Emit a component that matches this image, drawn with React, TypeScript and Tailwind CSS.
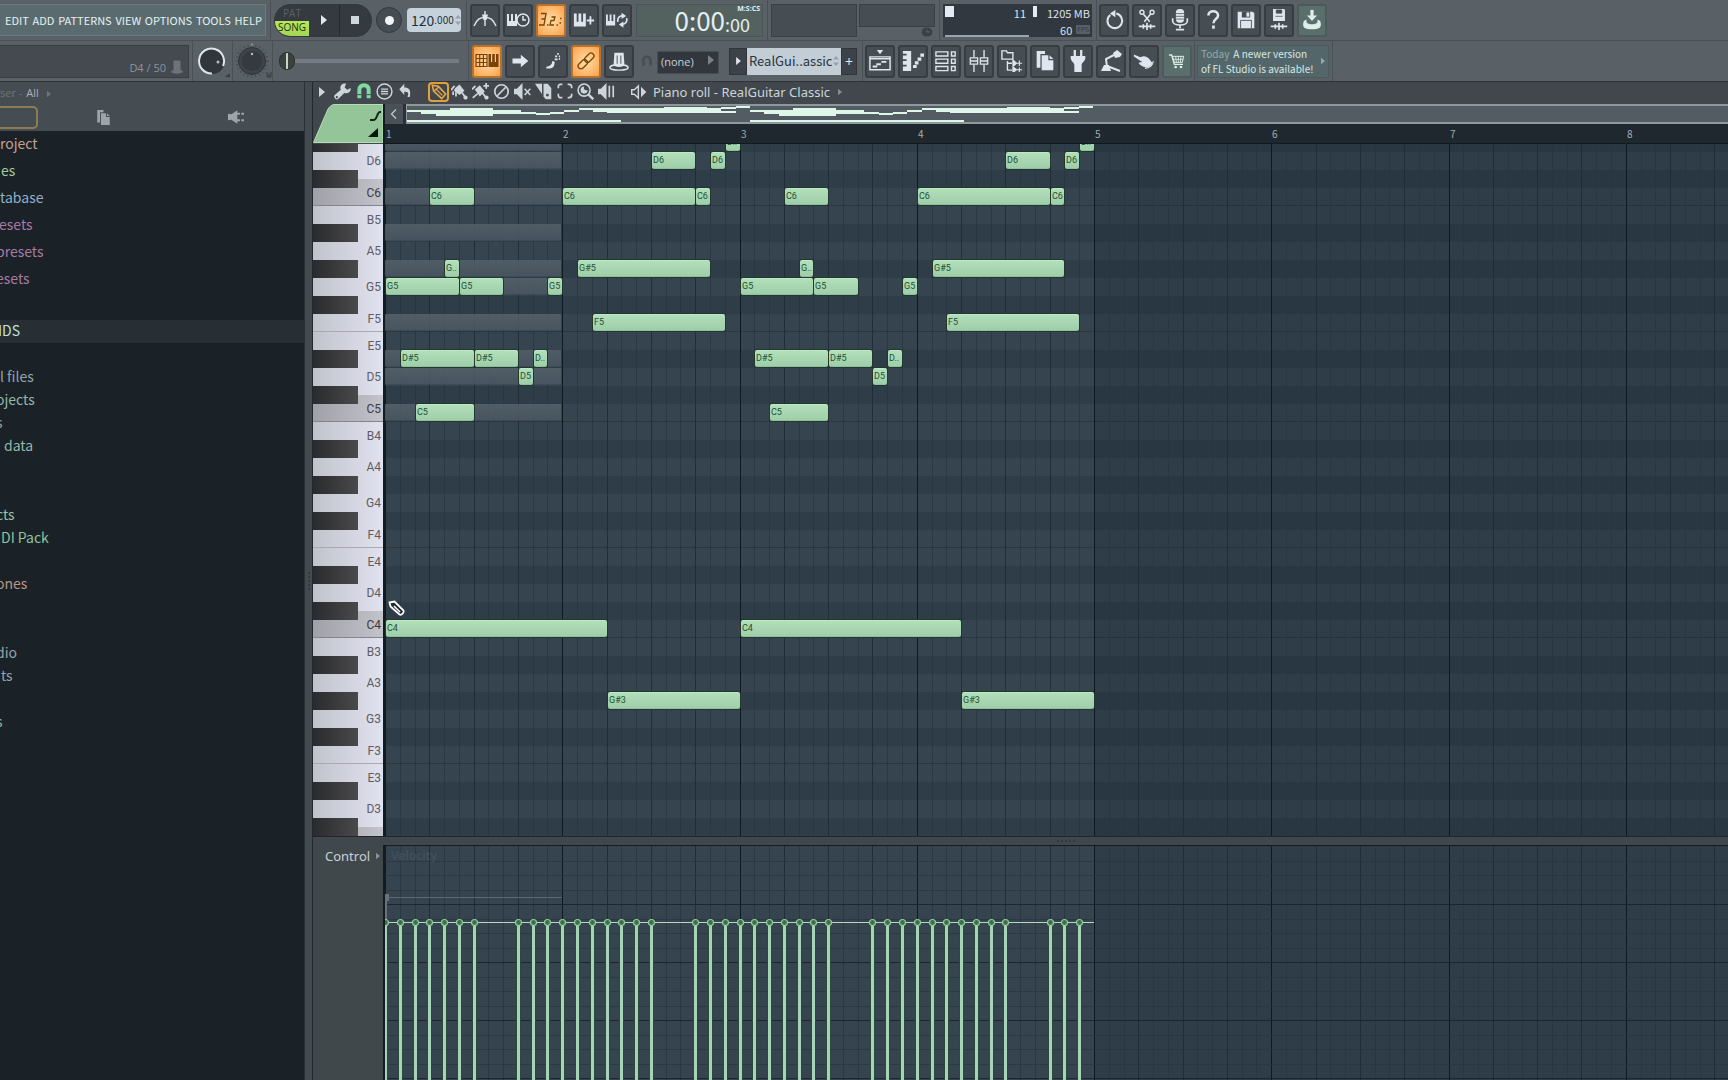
import React from "react";

const NARROW = "font-['Noto_Sans_CJK_SC','Open_Sans',sans-serif]";

/* ---------- score data ---------- */

const BAR = 177.25;
const ROW = 18;
const SONG_STEPS = 48;
const x = (step: number) => Math.round((step * BAR) / 12);

const NAMES = ["C", "C#", "D", "D#", "E", "F", "F#", "G", "G#", "A", "A#", "B"];
const ROWS: string[] = [];
for (let p = 6 * 12 + 3; p >= 3 * 12 + 1; p--) ROWS.push(NAMES[p % 12] + Math.floor(p / 12));

type Note = [pitch: string, start: number, end: number, label?: string];
const PHRASE: Note[] = [
  ["C4", 0, 15],
  ["G#3", 15, 24],
  ["G5", 0, 5],
  ["G5", 5, 8],
  ["G5", 11, 12],
  ["G#5", 4, 5, "G.."],
  ["C6", 3, 6],
  ["D#5", 1, 6],
  ["D#5", 6, 9],
  ["D#5", 10, 11, "D.."],
  ["D5", 9, 10],
  ["C5", 2, 6],
  ["C6", 12, 21],
  ["C6", 21, 22],
  ["G#5", 13, 22],
  ["F5", 14, 23],
  ["D6", 18, 21],
  ["D6", 22, 23],
  ["D#6", 23, 24, "D.."],
];
const NOTES: Note[] = [0, 24].flatMap((o) =>
  PHRASE.map(([p, s, e, l]) => [p, s + o, e + o, l] as Note),
);
const GHOSTS = ["D#6", "D6", "C6", "A#5", "G#5", "G5", "F5", "D#5", "D5", "C5"];
const PHRASE_HITS = [0, 1, 2, 3, 4, 5, 6, 9, 10, 11, 12, 13, 14, 15, 16, 17, 18, 21, 22, 23];
const HITS = [...PHRASE_HITS, ...PHRASE_HITS.map((h) => h + 24)];
const rowTop = (pitch: string) => ROWS.indexOf(pitch) * ROW - 10;

/* ---------- icons ---------- */

function Icon({ children, size = 22, className = "" }: { children: React.ReactNode; size?: number; className?: string }) {
  return (
    <svg
      width={size}
      height={size}
      viewBox="0 0 24 24"
      fill="none"
      stroke="currentColor"
      strokeWidth="2"
      className={`shrink-0 ${className}`}
      aria-hidden="true"
    >
      {children}
    </svg>
  );
}

const F = { fill: "currentColor", stroke: "none" };

const icons = {
  metronome: (
    <Icon size={24}>
      <path d="M1 18C4 11 7 9.500 12 9.500s8 1.500 11 8.500" strokeWidth="1.400" />
      <path d="M12 3v15" strokeWidth="1.400" />
      <path d="M9 6.500h6l-1.500 5.500h-3z" {...F} />
    </Icon>
  ),
  wait: (
    <Icon size={24}>
      <path d="M1 6h2v7h2V6h2v7h2V6h2v12H1z" {...F} />
      <circle cx="17" cy="12" r="6" fill="#444b51" strokeWidth="1.500" />
      <path d="M17 8v4h3" strokeWidth="1.500" />
    </Icon>
  ),
  countdown: (
    <Icon size={24}>
      <path d="M2 5.500h5L6 11H2.500 6l-1 6H0M12.500 9h3.500l-1 3.500h-3l-1 4.500h4" strokeWidth="1.300" />
      <path d="M8 17h1.500M17.500 17H19M21 10.500h1.500M20.500 15h1.500" strokeWidth="1.600" />
    </Icon>
  ),
  blend: (
    <Icon>
      <path d="M1 5h3v9h2V5h3v9h2V5h3v14H1z" {...F} />
      <path d="M19 8v9M15 12.500h8" />
    </Icon>
  ),
  loopRec: (
    <Icon>
      <path d="M0 6h2v7h2V6h2v7h2V6h2v12H0z" {...F} />
      <path d="M13 14c-1-4 2-7 5-6.500M22.500 10c1 4-2 7-5 6.500" strokeWidth="1.800" />
      <path d="M17 4l5 3.500-5 3.500zM19 20.500L14 17l5-3.500z" {...F} />
    </Icon>
  ),
  stepPiano: (
    <Icon size={24}>
      <path d="M1 5.500h11v12H1zM1 9.500h11M1 13.500h11M4.700 5v13M8.400 5v13" strokeWidth="1.200" />
      <path d="M13.500 5H16v8h1.200V5h2.600v8H21V5h2.500v13h-10z" {...F} />
    </Icon>
  ),
  arrow: (
    <Icon size={20}>
      <path d="M3 9h10V4.500l9 7.500-9 7.500V15H3z" {...F} />
    </Icon>
  ),
  scrollTo: (
    <Icon size={20}>
      <path d="M4 21h4c4 0 6-3 6-8l-3-1c0 4-2 6-7 7z" {...F} />
      <path d="M14 10h3.500M14.500 6.500H17M17 3.500h2M19 6.500h1.500M19 9.500h1.500" strokeWidth="2" />
    </Icon>
  ),
  link: (
    <Icon size={20}>
      <g transform="rotate(-45 12 12)" strokeWidth="1.600">
        <rect x="0" y="8.500" width="13" height="7" rx="3.500" />
        <rect x="11" y="8.500" width="13" height="7" rx="3.500" />
      </g>
    </Icon>
  ),
  hat: (
    <Icon>
      <ellipse cx="12" cy="19" rx="10" ry="3" strokeWidth="1.500" />
      <path d="M7 3h10l1 14c-3 2-9 2-12 0z" {...F} />
      <path d="M10 6v9M14 6v9" stroke="#444b51" strokeWidth="1" />
    </Icon>
  ),
  undoCircle: (
    <Icon>
      <path d="M8 6.500A8 8 0 1 0 14.500 5" strokeWidth="2.200" />
      <path d="M13.500 1v8L7.500 5z" {...F} />
    </Icon>
  ),
  cut: (
    <Icon>
      <circle cx="6.500" cy="3.500" r="2.200" strokeWidth="1.500" />
      <circle cx="17.500" cy="3.500" r="2.200" strokeWidth="1.500" />
      <path d="M8 5.500l7 8.500M16 5.500L9 14" strokeWidth="1.700" />
      <path d="M3 19h18M8 16.500v5M12 15v8M16 16.500v5" strokeWidth="1.800" />
    </Icon>
  ),
  mic: (
    <Icon>
      <rect x="7.500" y="0" width="9" height="15" rx="4" {...F} />
      <path d="M7 5h10M7 8h10M7 11h10" stroke="#444b51" strokeWidth=".8" />
      <path d="M4 10v3c0 6 16 6 16 0v-3M12 17v4M7.500 22.500h9" strokeWidth="1.800" />
    </Icon>
  ),
  help: (
    <Icon>
      <path d="M7 7c0-6 10.500-6 10.500 0 0 4-5 4-5 8.500" strokeWidth="2.800" />
      <rect x="11" y="18" width="3" height="3.500" {...F} />
    </Icon>
  ),
  save: (
    <Icon size={20}>
      <path d="M2 2h18l2 2v18H2z" {...F} />
      <path d="M7 2h10v7H7z" fill="#444b51" stroke="none" />
      <path d="M12.500 3H16v5h-3.500z" {...F} />
      <path d="M5 12.500h14M5.500 13v9M18.500 13v9" stroke="#444b51" strokeWidth="1" />
    </Icon>
  ),
  saveAs: (
    <Icon>
      <path d="M5.500 0h12l1 1v12h-13z" {...F} />
      <path d="M9 1h6v3.500H9zM8 8h8" fill="#444b51" stroke="#444b51" strokeWidth=".8" />
      <path d="M3 19h18M8 16.500v5M12 15v8M16 16.500v5" strokeWidth="1.800" />
    </Icon>
  ),
  download: (
    <Icon>
      <path d="M12 1v8" strokeWidth="3.500" />
      <path d="M6.500 7h11L12 13z" {...F} />
      <path d="M3 13c-2.500 8 2 9 9 9s11.500-1 9-9l-3-1.500v3c-2 3-10 3-12 0v-3z" {...F} />
    </Icon>
  ),
  playlist: (
    <Icon>
      <path d="M8.500 0h7L12 4.500z" {...F} />
      <path d="M1 7.500h22v14H1zM1 9.500h22" strokeWidth="1.600" />
      <path d="M4 18h5M8 15.500h5M13.500 13h5.500" strokeWidth="2" />
    </Icon>
  ),
  pianoRoll: (
    <Icon>
      <path d="M1 1h9v22H1v-5h4v-2H1v-4h4v-2H1V6h4V4H1z" {...F} />
      <path d="M12 18h4M14 14h4M17 10h4M20 5.500h4" strokeWidth="3.500" />
    </Icon>
  ),
  channelRack: (
    <Icon>
      <path d="M1 2h13v4.500H1zM1 10h13v4.500H1zM1 18h13v4.500H1zM18 2h4v4.500h-4zM18 10h4v4.500h-4zM18 18h4v4.500h-4z" strokeWidth="1.500" />
    </Icon>
  ),
  mixer: (
    <Icon>
      <path d="M6.500 0v8M6.500 16v8M17.500 0v8M17.500 16v8" strokeWidth="1.500" />
      <path d="M2.500 8.500h8v7h-8zM13.500 8.500h8v7h-8zM2.500 12h8M13.500 12h8" strokeWidth="1.400" />
    </Icon>
  ),
  browser: (
    <Icon>
      <path d="M1 1h5l1 2h6v7H1z" strokeWidth="1.500" />
      <path d="M7 12v10h5M7 14.500h5" strokeWidth="1.500" />
      <path d="M13 11v7l4-3.500zM17 14.500h6M20 11.500v6M13 18.500v6l4-3zM17 21.500h6M20 19v5" fill="currentColor" strokeWidth="1.200" />
    </Icon>
  ),
  project: (
    <Icon size={20}>
      <path d="M2 0h10v3.500H6.500V20H2z" {...F} />
      <path d="M8 5h8v6h6v12H8z" {...F} />
      <path d="M17.500 5l4.500 4.500h-4.500z" {...F} />
    </Icon>
  ),
  plug: (
    <Icon>
      <path d="M8.500 0v7M15.500 0v7" strokeWidth="2.500" />
      <path d="M4 6.500h16v2c0 4-4 5-4 8V24H8v-7.500c0-3-4-4-4-8z" {...F} />
    </Icon>
  ),
  tempoTap: (
    <Icon size={24}>
      <path d="M14 4l4-3 5 4-2 3-5 1z" {...F} />
      <path d="M15 6L7 10l1 8M8 17l13 5" strokeWidth="2" />
      <path d="M5 16h5l2 6H2z" {...F} />
    </Icon>
  ),
  touch: (
    <Icon size={22}>
      <path d="M1 5l7 3c4-2 6-1 9 1l4 5c0 3-3 5-6 5-4 0-7-2-9-5l4-1-9-6z" {...F} />
      <path d="M22 12c0 5-4 8-9 8" strokeWidth="1.200" />
    </Icon>
  ),
  cart: (
    <Icon size={16}>
      <path d="M0 3h4l4 14h13" strokeWidth="2" />
      <path d="M5 5h17l-2 9H8z" strokeWidth="1.500" />
      <path d="M10 5l1 9M14 5v9M18 5l-1 9M6 9.500h15" strokeWidth="1.300" />
      <circle cx="10" cy="21" r="2" {...F} />
      <circle cx="18" cy="21" r="2" {...F} />
    </Icon>
  ),
  wrench: (
    <Icon size={17}>
      <path d="M23.500 7l-5 2.500-3.500-3.500 2-5C11 0 7.500 4.500 9.500 9.500L1 17c-2.500 3 2 8 5 5.500l8.500-8.500c5.500 1.500 10-2 9-7zM4 18.500a1.500 1.500 0 1 1 0 3 1.500 1.500 0 0 1 0-3z" fillRule="evenodd" {...F} />
    </Icon>
  ),
  magnet: (
    <Icon size={16}>
      <path d="M5 23V10c0-9 14-9 14 0v13" strokeWidth="6" />
      <path d="M2 17.500h6M16 17.500h6" stroke="#41484d" strokeWidth="1.500" />
    </Icon>
  ),
  menu: (
    <Icon size={17}>
      <circle cx="12" cy="12" r="10.500" />
      <path d="M7 8.500h10M7 12h10M7 15.500h10" strokeWidth="1.800" />
    </Icon>
  ),
  undo: (
    <Icon size={15}>
      <path d="M10 1v6c8 0 11 4 9 15-1 1-3 0-4 0 3-6 1-8-5-8v5L2 10z" {...F} />
    </Icon>
  ),
  pencil: (
    <Icon size={16}>
      <path d="M2 2l9 1.500L22 15l-6 7L4 10.500z" strokeWidth="2.400" />
      <path d="M8 8l9 9M12 4L5 10" strokeWidth="1.900" />
    </Icon>
  ),
  brush: (
    <Icon size={17}>
      <path d="M6 7l6-5 7 9-7 6-8-6z" {...F} />
      <path d="M0 10L5 4M15 13l6 8M3 12v5M7 13v6" strokeWidth="2.500" />
      <circle cx="20.500" cy="20.500" r="3" {...F} />
    </Icon>
  ),
  brushPlus: (
    <Icon size={17}>
      <path d="M4 9l7-6 7 9-7 7z" {...F} />
      <path d="M0 9l5-5M1 21l7-6M14 13l6 8M20 0v8M16 4h8" strokeWidth="2.500" />
      <circle cx="20.500" cy="20.500" r="3" {...F} />
    </Icon>
  ),
  forbid: (
    <Icon size={17}>
      <circle cx="12" cy="12" r="9.500" strokeWidth="2.400" />
      <path d="M18 6L6 18" strokeWidth="2.400" />
    </Icon>
  ),
  mute: (
    <Icon size={17}>
      <path d="M0 8h4l8-8v24l-8-8H0z" {...F} />
      <path d="M15 8l8 9M23 8l-8 9" strokeWidth="2.200" />
    </Icon>
  ),
  slice: (
    <Icon size={17}>
      <path d="M0 1h10v15z" {...F} />
      <path d="M12 1h6l5 6v16h-8l-3-4z" {...F} />
      <circle cx="17.500" cy="17" r="2" fill="#41484d" stroke="none" />
    </Icon>
  ),
  select: (
    <Icon size={16}>
      <path d="M2 8V6c0-3 1-4 4-4h2M16 2h2c3 0 4 1 4 4v2M22 16v2c0 3-1 4-4 4h-2M8 22H6c-3 0-4-1-4-4v-2" strokeWidth="2.600" />
    </Icon>
  ),
  zoom: (
    <Icon size={17}>
      <circle cx="10" cy="10" r="8.500" strokeWidth="2.200" />
      <path d="M10 5a5 5 0 1 0 5 5c-4 1-6-1-5-5z" {...F} />
      <path d="M16 16l7 7" strokeWidth="3.500" />
    </Icon>
  ),
  playback: (
    <Icon size={17}>
      <path d="M0 8h4l8-8v24l-8-8H0z" {...F} />
      <path d="M16 4v16M21.500 4v16" strokeWidth="2.400" />
    </Icon>
  ),
  speaker: (
    <Icon size={16}>
      <path d="M1 8.500h4L11 3v18l-6-5.500H1z" strokeWidth="2.200" />
      <path d="M15 4l8 8-8 8z" {...F} />
    </Icon>
  ),
};

function Tri({ className = "" }: { className?: string }) {
  return (
    <svg width="6" height="10" viewBox="0 0 6 10" fill="currentColor" className={`shrink-0 ${className}`} aria-hidden="true">
      <path d="M0 0l6 5-6 5z" />
    </svg>
  );
}

/* ---------- toolbar ---------- */

type Tone = "dark" | "orange" | "teal";

function Tool({ icon, label, tone = "dark" }: { icon: React.ReactNode; label: string; tone?: Tone }) {
  const tones = {
    dark: "border-[#373d43] bg-[#464d53] text-[#dfe6ed]",
    orange: "border-[#b8722a] bg-radial from-[#ffe0a6] to-[#fb9f45] text-[#7a4208]",
    teal: "border-[#4b5b5b] bg-[#5a6e6c] text-[#dfeee9]",
  };
  return (
    <button
      aria-label={label}
      className={`flex h-[33px] w-[30px] shrink-0 items-center justify-center rounded-[3px] border-2 ${tones[tone]}`}
    >
      {icon}
    </button>
  );
}

function Segment({ children, className = "" }: { children?: React.ReactNode; className?: string }) {
  return (
    <div className={`flex h-full shrink-0 items-center border-r border-r-[#495056] ${className}`}>{children}</div>
  );
}

function Spin({ className = "" }: { className?: string }) {
  return (
    <svg width="6" height="12" viewBox="0 0 6 12" fill="currentColor" className={`shrink-0 ${className}`} aria-hidden="true">
      <path d="M0 4.500L3 1l3 3.500zM0 7.500L3 11l3-3.500z" />
    </svg>
  );
}

function TopRow() {
  return (
    <div className="flex h-[41px] items-center border-b border-[#495056]">
      <Segment className="w-[271px]">
        <nav
          className={`flex h-8 w-[266px] items-center justify-between border border-l-0 border-[#6b7a7e] bg-[#5a6b6f] pr-[3px] pl-[5px] text-[11px] text-[#e6f1f2] ${NARROW}`}
        >
          {["EDIT", "ADD", "PATTERNS", "VIEW", "OPTIONS", "TOOLS", "HELP"].map((m) => (
            <button key={m}>{m}</button>
          ))}
        </nav>
      </Segment>
      <Segment className="w-[196px] pl-[3px]">
        <div className="flex h-[33px] w-[98px] overflow-hidden rounded-[16px] border border-[#33393f] bg-[#343a40]">
          <button className="flex w-[34px] flex-col text-[10px] leading-[16px]">
            <span className="w-full text-center font-['Open_Sans',sans-serif] text-[#5b6268]">PAT</span>
            <span className="w-full flex-1 bg-linear-to-b from-[#b5e85c] to-[#a2d653] text-center font-['Open_Sans',sans-serif] leading-[13px] text-[#1d2d10]">
              SONG
            </span>
          </button>
          <button aria-label="Play" className="flex w-[31px] items-center justify-center border-r border-[#24292e] text-[#dfe6ed]">
            <Tri />
          </button>
          <button aria-label="Stop" className="flex flex-1 items-center justify-center">
            <span className="mr-[2px] size-2 bg-[#cfd6dc]" />
          </button>
        </div>
        <button
          aria-label="Record"
          className="ml-1 flex size-[26px] items-center justify-center rounded-full border border-[#33393f] bg-[#454c52]"
        >
          <span className="size-[9px] rounded-full bg-[#f2f5f8]" />
        </button>
        <div
          className={`ml-[5px] flex h-6 w-[54px] items-center rounded-[4px] bg-[#c6d2db] pl-1 leading-6 text-[#25323c] ${NARROW}`}
        >
          <span className="text-[14px]">120</span>
          <span className="text-[10px]">.000</span>
          <Spin className="ml-px text-[#94a2ad]" />
        </div>
      </Segment>
      <Segment className="w-[301px] gap-[3px] pl-[3px]">
        <Tool label="Metronome" icon={icons.metronome} />
        <Tool label="Wait for input" icon={icons.wait} />
        <Tool label="Countdown" icon={icons.countdown} tone="orange" />
        <Tool label="Blend recording" icon={icons.blend} />
        <Tool label="Loop recording" icon={icons.loopRec} />
        <div
          className={`relative ml-px flex h-[33px] w-[127px] items-center justify-end border border-[#4a5559] bg-[#53625f] pr-3 text-[#e3eff2] ${NARROW}`}
        >
          <span className="text-[26px] leading-8">0:00</span>
          <span className="mt-2 text-[18px] leading-5">:00</span>
          <span className="absolute top-0 right-[2px] font-['Open_Sans',sans-serif] text-[7px] leading-[8px] font-bold">
            M:S:CS
          </span>
        </div>
      </Segment>
      <Segment className="w-[172px] gap-[2px] pl-[3px]">
        <div className="h-[33px] w-[86px] border border-[#3a4046] bg-[#464d53]" />
        <div className="flex h-[33px] w-[76px] flex-col items-end">
          <div className="h-[23px] w-full border border-[#3a4046] bg-[#464d53]" />
          <svg width="12" height="10" viewBox="0 0 12 10" className="mr-[2px]" aria-hidden="true">
            <ellipse cx="6" cy="5" rx="5.500" ry="4.500" fill="#3b4147" />
            <path d="M6 2.500V5h3" stroke="#5d646a" fill="none" />
          </svg>
        </div>
      </Segment>
      <Segment className="w-[157px] pl-[3px]">
        <div
          className={`flex h-[33px] w-[149px] bg-[#31383f] px-[2px] pt-[2px] text-[11px] leading-[14px] whitespace-nowrap text-[#dbe3ea] ${NARROW}`}
        >
          <div className="flex w-[84px] flex-col border-b-2 border-[#9aa4ac]">
            <div className="flex items-start justify-between">
              <span className="h-[11px] w-[9px] bg-[#e4eaf0]" />
              <span className="pr-[3px]">11</span>
            </div>
          </div>
          <div className="flex flex-1 flex-col pl-1">
            <div className="flex items-start justify-between">
              <span className="h-[11px] w-1 bg-[#e4eaf0]" />
              <span>1205 MB</span>
            </div>
            <div className="mt-[3px] flex items-center justify-end gap-1">
              <span>60</span>
              <span className="rounded-[1px] bg-[#596066] px-px font-['Open_Sans',sans-serif] text-[7px] leading-[9px] text-[#31383f]">
                FPS
              </span>
            </div>
          </div>
        </div>
      </Segment>
      <div className="flex gap-[3px] pl-[2px]">
        <Tool label="Undo" icon={icons.undoCircle} />
        <Tool label="Cut" icon={icons.cut} />
        <Tool label="Audio recording" icon={icons.mic} />
        <Tool label="Help" icon={icons.help} />
        <Tool label="Save" icon={icons.save} />
        <Tool label="Render" icon={icons.saveAs} />
        <Tool label="Download update" icon={icons.download} tone="teal" />
      </div>
    </div>
  );
}

function SecondRow() {
  return (
    <div className="flex h-10 items-center">
      <Segment className="w-[193px]">
        <div className="flex h-[33px] w-[189px] items-end justify-end gap-1 border border-l-0 border-[#373d43] bg-[#444a50] pr-1 pb-px text-[#8c939a]">
          <span className="font-['Open_Sans',sans-serif] text-[11px] leading-4">D4 / 50</span>
          <span className="mb-[2px] text-[#6c7379]">
            <Icon size={14}>
              <ellipse cx="12" cy="20" rx="10" ry="3.500" {...F} />
              <path d="M6 1h12v18H6z" {...F} />
            </Icon>
          </span>
        </div>
      </Segment>
      <Segment className="w-10 justify-center">
        <svg width="36" height="36" viewBox="0 0 36 36" fill="none" role="img" aria-label="Master volume">
          <circle cx="17" cy="18" r="13" fill="#30363c" />
          <path d="M17 30.500A12.500 12.500 0 1 1 28 23" stroke="#dfe5ea" strokeWidth="2" />
          <circle cx="23" cy="19" r="1.500" fill="#b8c0c6" />
          <path d="M30 34l5-4v4z" fill="#363c42" />
        </svg>
      </Segment>
      <Segment className="w-10 justify-center">
        <svg width="38" height="36" viewBox="0 0 38 36" fill="none" role="img" aria-label="Master pitch">
          <circle cx="18" cy="18" r="15.500" stroke="#43494f" strokeWidth="2" strokeDasharray="1 3" />
          <circle cx="18" cy="18" r="13.500" fill="#3d4349" stroke="#2f353a" />
          <circle cx="18" cy="18" r="10" fill="#343a40" />
          <circle cx="18" cy="11" r="1.200" fill="#b8c0c6" />
          <circle cx="18" cy="1.500" r="1.200" fill="#868d93" />
          <path d="M33 29v5h4v-5M35 34v-4" stroke="#363c42" />
        </svg>
      </Segment>
      <Segment className="w-[196px] pl-[6px]">
        <input
          type="range"
          aria-label="Song position"
          defaultValue={0}
          className="h-5 w-[180px] appearance-none bg-[linear-gradient(#747b82,#747b82)] bg-[length:100%_4px] bg-center bg-no-repeat [&::-webkit-slider-thumb]:h-[18px] [&::-webkit-slider-thumb]:w-4 [&::-webkit-slider-thumb]:appearance-none [&::-webkit-slider-thumb]:rounded-full [&::-webkit-slider-thumb]:border [&::-webkit-slider-thumb]:border-[#2a2f2c] [&::-webkit-slider-thumb]:bg-[linear-gradient(90deg,#3b423e_6px,#c8d4c0_6px,#c8d4c0_8px,#3b423e_8px)]"
        />
      </Segment>
      <Segment className="w-[394px] pl-[3px]">
        <div className="flex gap-[3px]">
          <Tool label="Typing keyboard" icon={icons.stepPiano} tone="orange" />
          <Tool label="Step mode" icon={icons.arrow} />
          <Tool label="Scrolling" icon={icons.scrollTo} />
          <Tool label="Link" icon={icons.link} tone="orange" />
          <Tool label="Hints" icon={icons.hat} />
        </div>
        <span className="ml-[7px] text-[#474e54]">
          <Icon size={12}>
            <path d="M5 22V10c0-9 14-9 14 0v12" strokeWidth="5" />
          </Icon>
        </span>
        <div className="relative ml-1">
          <select
            aria-label="Snap"
            className="h-[23px] w-[62px] appearance-none border border-[#474e54] bg-[#31373d] pl-[3px] font-['Open_Sans',sans-serif] text-[11px] leading-5 text-[#c9d0d7]"
          >
            <option>(none)</option>
          </select>
          <Tri className="pointer-events-none absolute top-[7px] right-[5px] text-[#798087]" />
        </div>
        <div className="ml-[10px] flex h-[27px] items-stretch">
          <button aria-label="Pattern menu" className="flex w-[18px] items-center justify-center border border-[#2f353a] bg-[#3c4248] text-[#dfe6ed]">
            <Tri className="h-2 w-[5px]" />
          </button>
          <div className="flex w-[94px] items-center bg-[#c3cdd6] pr-[2px] text-[#27333d]">
            <input
              aria-label="Pattern name"
              defaultValue="RealGui..assic"
              className={`w-[86px] min-w-0 pl-[2px] text-[13px] leading-6 outline-none ${NARROW}`}
            />
            <Spin className="text-[#94a2ad]" />
          </div>
          <button
            aria-label="Add pattern"
            className="flex w-4 items-center justify-center border border-[#2f353a] bg-[#3c4248] font-['Open_Sans',sans-serif] text-[14px] text-[#dfe6ed]"
          >
            +
          </button>
        </div>
      </Segment>
      <Segment className="w-[332px] gap-[3px] pl-[2px]">
        <Tool label="Playlist" icon={icons.playlist} />
        <Tool label="Piano roll" icon={icons.pianoRoll} />
        <Tool label="Channel rack" icon={icons.channelRack} />
        <Tool label="Mixer" icon={icons.mixer} />
        <Tool label="Browser" icon={icons.browser} />
        <Tool label="Project picker" icon={icons.project} />
        <Tool label="Plugin picker" icon={icons.plug} />
        <Tool label="Tempo tapper" icon={icons.tempoTap} />
        <Tool label="Touch controllers" icon={icons.touch} />
        <Tool label="Content library" icon={icons.cart} tone="teal" />
      </Segment>
      <Segment className="w-[138px] pl-[2px]">
        <button
          className={`flex h-[33px] w-[132px] items-center justify-between border border-[#4a5a5a] bg-[#53676a] px-[3px] text-left text-[10px] leading-[15px] whitespace-nowrap text-[#d9e8e6] ${NARROW}`}
        >
          <span>
            <span className="mr-1 text-[#97a8a8]">Today</span>A newer version
            <br />
            of FL Studio is available!
          </span>
          <Tri className="h-2 w-1 text-[#97a8a8]" />
        </button>
      </Segment>
    </div>
  );
}

/* ---------- browser ---------- */

const PLACES: [string, string, string][] = [
  ["roject", "text-[#c9a091]", "pl-0"],
  ["es", "text-[#a3c9a0]", "pl-px"],
  ["tabase", "text-[#8fb0cc]", "pl-0"],
  ["esets", "text-[#a87ba6]", "-ml-px"],
  ["presets", "text-[#a87ba6]", "-ml-1"],
  ["esets", "text-[#a87ba6]", "-ml-1"],
];

const FOLDERS: [string, string, string][] = [
  ["", "", ""],
  ["l files", "text-[#93a4ab]", "pl-0"],
  ["ojects", "text-[#93b8a6]", "-ml-1"],
  ["s", "text-[#93a4ab]", "-ml-1"],
  ["data", "text-[#93b8a6]", "pl-1"],
  ["", "", ""],
  ["", "", ""],
  ["cts", "text-[#93c3a6]", "-ml-1"],
  ["DI Pack", "text-[#8fc3a0]", "pl-px"],
  ["", "", ""],
  ["ones", "text-[#b99584]", "-ml-1"],
  ["", "", ""],
  ["", "", ""],
  ["dio", "text-[#93a4ab]", "-ml-1"],
  ["ts", "text-[#93a4ab]", "pl-px"],
  ["", "", ""],
  ["s", "text-[#93b8a6]", "-ml-1"],
];

function Browser() {
  return (
    <aside className={`flex w-[304px] shrink-0 flex-col overflow-hidden bg-[#1a2127] text-[14px] ${NARROW}`}>
      <div className="h-[49px] bg-[#464d52]">
        <div className="flex h-[23px] items-center gap-1 font-['Open_Sans',sans-serif] text-[11px] text-[#6c7478]">
          <span>ser -</span>
          <span className="text-[#a9b1b6]">All</span>
          <Tri className="ml-1 h-2 w-1" />
        </div>
        <div className="flex h-6 items-center text-[#9da5aa]">
          <button aria-label="All" className="h-[23px] w-[38px] rounded-r-[5px] border-2 border-l-0 border-[#8d7b55]" />
          <button aria-label="Current project" className="ml-[58px]">
            <Icon size={15}>
              <path d="M2 0h10v3.500H6.500V20H2z" {...F} />
              <path d="M8 5h8v6h6v13H8z" {...F} />
              <path d="M17.500 5l4.500 4.500h-4.500z" {...F} />
            </Icon>
          </button>
          <button aria-label="Plugins" className="ml-[117px]">
            <Icon size={16}>
              <path d="M0 7l5 1 9-6v20l-9-6-5 1z" {...F} />
              <path d="M13 7h5M13 17h5M20 7h4M20 17h4" strokeWidth="3" />
            </Icon>
          </button>
        </div>
      </div>
      <ul>
        {PLACES.map(([t, c, o], i) => (
          <li key={i} className={`h-[27px] leading-[25px] ${c}`}>
            <button className={o}>{t}</button>
          </li>
        ))}
      </ul>
      <div className="mt-[27px] h-[23px] bg-[#272e34] leading-[21px] text-[#c3e0d6]">
        <button className="-ml-2">NDS</button>
      </div>
      <ul>
        {FOLDERS.map(([t, c, o], i) => (
          <li key={i} className={`h-[23px] leading-[21px] ${c}`}>
            {t && <button className={o}>{t}</button>}
          </li>
        ))}
      </ul>
    </aside>
  );
}

function Grip({ className = "" }: { className?: string }) {
  return (
    <div className={`flex gap-[2px] ${className}`}>
      {[0, 1, 2, 3, 4].map((i) => (
        <span key={i} className="size-[2px] rounded-full bg-[#2f363b]" />
      ))}
    </div>
  );
}

/* ---------- piano roll ---------- */

function TitleBar() {
  const left = [
    ["Options", icons.wrench],
    ["Snap to grid", icons.magnet],
    ["Menu", icons.menu],
    ["Undo", icons.undo],
  ] as const;
  const tools = [
    ["Paint", icons.brush],
    ["Paint sequence", icons.brushPlus],
    ["Delete", icons.forbid],
    ["Mute", icons.mute],
    ["Slice", icons.slice],
    ["Select", icons.select],
    ["Zoom", icons.zoom],
    ["Play", icons.playback],
  ] as const;
  return (
    <div className="flex h-[22px] items-start bg-[#41474c] text-[#cdd4da]">
      <div className="flex h-[19px] items-center">
        <Tri className="ml-[6px]" />
        <div className="ml-[7px] flex">
          {left.map(([l, ic]) => (
            <button
              key={l}
              aria-label={l}
              className={`flex w-[21px] justify-center ${l === "Snap to grid" ? "text-[#7fd9a2]" : ""}`}
            >
              {ic}
            </button>
          ))}
        </div>
        <button
          aria-label="Draw"
          className="ml-3 flex h-5 w-[21px] items-center justify-center rounded-[4px] border-2 border-[#e2a03a] text-[#eaa944]"
        >
          {icons.pencil}
        </button>
        <div className="flex">
          {tools.map(([l, ic]) => (
            <button key={l} aria-label={l} className="flex w-[21px] justify-center">
              {ic}
            </button>
          ))}
        </div>
        <button aria-label="Preview" className="ml-[14px] w-[22px]">
          {icons.speaker}
        </button>
        <h1 className="font-['Noto_Sans',sans-serif] text-[13px] leading-[18px] whitespace-nowrap">
          Piano roll - RealGuitar Classic
        </h1>
        <Tri className="ml-2 h-2 w-1 text-[#868d93]" />
      </div>
    </div>
  );
}

function MiniMap() {
  const mx = (s: number) => Math.round((s * 171.5) / 12);
  const top = ROWS.indexOf("D#6");
  const bottom = ROWS.indexOf("C4");
  return (
    <div className="flex h-5 bg-[#2a3238]">
      <button aria-label="Scroll left" className="flex w-[18px] items-center justify-center bg-[#4a5257] text-[#c3cbd0]">
        <Icon size={12}>
          <path d="M16 3L7 12l9 9" strokeWidth="2.500" />
        </Icon>
      </button>
      <div className="w-[3px]" />
      <div className="relative flex-1 overflow-hidden border border-y-2 border-r-0 border-[#8f999d] bg-[#525c62]">
        {NOTES.map(([p, s, e], i) => (
          <span
            key={i}
            className="absolute h-[2px] bg-[#dff7e8]"
            style={{
              left: mx(s),
              width: mx(e) - mx(s),
              top: Math.round(((ROWS.indexOf(p) - top) * 14) / (bottom - top)),
            }}
          />
        ))}
      </div>
    </div>
  );
}

function Ruler() {
  return (
    <ol className="relative h-5 overflow-hidden border-b border-[#131a1f] bg-[#1f282e] font-['Noto_Sans_CJK_SC','Open_Sans',sans-serif] text-[10px] leading-5 text-[#a3adb4]">
      {[1, 2, 3, 4, 5, 6, 7, 8].map((n) => (
        <li key={n} className="absolute" style={{ left: x((n - 1) * 12) + 1 }}>
          {n}
        </li>
      ))}
    </ol>
  );
}

const WHITE_HEIGHT: Record<string, string> = {
  C: "h-[27px] bg-linear-to-r from-[#a0a1a8] to-[#c3c3cb] border-b border-[#85868d] pt-[2px]",
  D: "h-[36px]",
  E: "h-[27px]",
  F: "h-[27px] border-b border-[#a8a9b2] pt-[2px]",
  G: "h-[36px]",
  A: "h-[36px]",
  B: "h-[27px]",
};

function Keyboard() {
  const whites = ROWS.filter((r) => !r.includes("#"));
  return (
    <div className="relative h-[692px] w-[70px] overflow-hidden bg-linear-to-r from-[#c1c3cc] to-[#e1e2ef]">
      {[...whites, "C3"].map((k, i) => (
        <div
          key={k}
          className={`flex items-center justify-end pr-[2px] font-['Roboto',sans-serif] text-[12px] leading-4 ${
            k[0] === "C" ? "text-[#3b3b42]" : "text-[#5d5d66]"
          } ${WHITE_HEIGHT[k[0]]} ${i === 0 ? "-mt-px" : ""}`}
        >
          {k !== "C3" && k}
        </div>
      ))}
      {ROWS.filter((r) => r.includes("#")).map((k) => (
        <span
          key={k}
          className="absolute left-0 h-[18px] w-[45px] bg-linear-to-r from-[#2a2b2e] to-[#4a4a4c]"
          style={{ top: rowTop(k) }}
        />
      ))}
    </div>
  );
}

function VerticalLines() {
  return (
    <svg className="absolute inset-0 h-full w-full" shapeRendering="crispEdges" aria-hidden="true">
      {Array.from({ length: 100 }, (_, s) => (
        <rect
          key={s}
          x={x(s)}
          y="0"
          width="1"
          height="100%"
          fill={s % 12 === 0 ? "#0f1920" : s % 3 === 0 ? "#1f2b35" : "#273540"}
          opacity={s % 12 === 0 ? 1 : s % 3 === 0 ? 0.9 : 0.7}
        />
      ))}
    </svg>
  );
}

function NoteGrid() {
  return (
    <div className="relative h-[692px] flex-1 overflow-hidden border-l-2 border-[#141c22] bg-[#34424d]">
      <div className="-mt-[10px]">
        {ROWS.map((r) => (
          <div
            key={r}
            className={`h-[18px] ${r.includes("#") ? "bg-[#2f3d48]" : "bg-[#36444f]"} ${
              (r[0] === "C" || r[0] === "F") && !r.includes("#") ? "border-b border-[#2a3741]" : ""
            }`}
          />
        ))}
      </div>
      <div className="absolute inset-y-0 right-0 bg-[#0e1a24]/16" style={{ left: x(SONG_STEPS) }} />
      <VerticalLines />
      {GHOSTS.map((g) => (
        <span
          key={g}
          className="absolute left-0 h-[17px] rounded-[1px] border-b border-[#3d4b56] bg-linear-to-b from-[#55626c]/85 to-[#4b5863]/85"
          style={{ top: rowTop(g), width: x(12) - 1 }}
        />
      ))}
      {NOTES.map(([p, s, e, label], i) => (
        <span
          key={i}
          className="absolute h-[17px] overflow-hidden rounded-[2px] border-y border-t-[#bfe8c7] border-b-[#8fbf9b] bg-linear-to-b from-[#b0dfb9] to-[#9fceaa] pl-px font-['Roboto',sans-serif] text-[9px] leading-[15px] whitespace-nowrap text-[#23502f] shadow-[0_0_0_1px_#22382f]"
          style={{ left: x(s) + 1, width: x(e) - x(s) - 1, top: rowTop(p) }}
        >
          {label ?? p}
        </span>
      ))}
      <svg width="18" height="18" viewBox="0 0 18 18" className="absolute top-[456px] left-[3px]" aria-hidden="true">
        <path d="M1.500 2.500l5-1 9 9c1 2-2 5-4 4l-9-8z" fill="#1f2a31" stroke="#fff" strokeWidth="1.800" />
        <path d="M6 6l6 6" stroke="#fff" strokeWidth="1.500" />
      </svg>
    </div>
  );
}

function VelocityLane() {
  const level = 76;
  return (
    <div className="relative flex-1 overflow-hidden border-t border-l-2 border-[#141c22] bg-[#36444f]">
      <div className="absolute inset-y-0 right-0 bg-[#0e1a24]/16" style={{ left: x(SONG_STEPS) }} />
      <VerticalLines />
      <svg className="absolute inset-0 h-full w-full" shapeRendering="crispEdges" aria-hidden="true">
        {Array.from({ length: 16 }, (_, i) => (
          <rect
            key={i}
            x="0"
            y={Math.round(14.5 * (i + 1))}
            width="100%"
            height="1"
            fill={i % 4 === 3 ? "#18242c" : "#273540"}
            opacity={i % 4 === 3 ? 0.9 : 0.7}
          />
        ))}
        <rect x="0" y="51" width={x(12)} height="1" fill="#5b6871" />
        <rect x="0" y="48" width="4" height="7" fill="#66727a" />
        <rect x="0" y="51" width="2" height="26" fill="#66727a" />
        <rect x="0" y={level} width={x(SONG_STEPS)} height="1" fill="#b2dcbf" />
      </svg>
      <svg className="absolute inset-0 h-full w-full" aria-hidden="true">
        {HITS.map((h) => (
          <g key={h}>
            <rect x={x(h) - 2} y={level + 3} width="5" height="100%" fill="#2b4a3c" />
            <rect x={x(h) - 1} y={level + 3} width="3" height="100%" fill="#a6d3b5" />
            <circle cx={x(h) + 0.5} cy={level + 0.5} r="3" fill="#3f6e4a" stroke="#93cc9f" strokeWidth="1.200" />
          </g>
        ))}
      </svg>
      <span className="absolute top-[2px] left-[6px] font-['Noto_Sans',sans-serif] text-[12px] leading-4 font-semibold text-[#42505b]">
        Velocity
      </span>
    </div>
  );
}

function PianoRoll() {
  return (
    <main className="flex min-w-0 flex-1 flex-col bg-[#41484c]">
      <TitleBar />
      <div className="flex">
        <div className="w-[70px] bg-[#41474c]">
          <svg width="70" height="40" viewBox="0 0 70 40" fill="none" aria-hidden="true">
            <path d="M.5 38.500L15 5c2-3 4-4.500 7-4.500h48v38z" fill="#93c598" stroke="#b6ddb9" />
            <path d="M57 16h4c3 0 3-8 6-8h1" stroke="#16241b" strokeWidth="2" />
            <path d="M55 33l10-9v9z" fill="#0d150f" />
          </svg>
        </div>
        <div className="flex min-w-0 flex-1 flex-col border-l-2 border-[#141c22]">
          <MiniMap />
          <Ruler />
        </div>
      </div>
      <div className="flex">
        <Keyboard />
        <NoteGrid />
      </div>
      <div className="flex h-[9px] items-center justify-center border-t border-[#1e262c] bg-[#41484d]">
        <Grip className="ml-[90px]" />
      </div>
      <div className="flex min-h-0 flex-1">
        <div className="flex w-[70px] items-start gap-[5px] pt-[3px] pl-3 font-['Noto_Sans',sans-serif] text-[13px] text-[#c9d0d5]">
          <span className="w-[46px] leading-4">Control</span>
          <Tri className="mt-1 h-2 w-1 text-[#8a9197]" />
        </div>
        <VelocityLane />
      </div>
    </main>
  );
}

export default function App() {
  return (
    <div className="flex h-screen flex-col overflow-hidden bg-[#596066] select-none">
      <header className="shrink-0 border-b border-[#2d3439]">
        <TopRow />
        <SecondRow />
      </header>
      <div className="flex min-h-0 flex-1">
        <Browser />
        <div className="flex w-[9px] shrink-0 flex-col items-center justify-center border-r border-l border-l-[#2a3136] border-r-[#22292e] bg-[#434b50]">
          <Grip className="flex-col" />
        </div>
        <PianoRoll />
      </div>
    </div>
  );
}
